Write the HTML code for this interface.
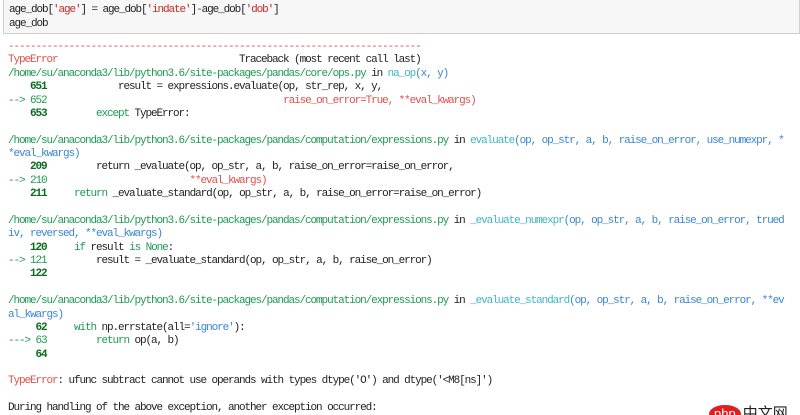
<!DOCTYPE html>
<html><head><meta charset="utf-8"><style>
html,body{margin:0;padding:0;background:#fff;width:800px;height:415px;overflow:hidden;position:relative}
pre{margin:0;font-family:"Liberation Mono","Noto Sans CJK SC",monospace;font-size:11px;letter-spacing:-1.1px;line-height:13.37px;color:#222;white-space:pre}
.in{position:absolute;left:3px;top:0;width:797px;height:34px;background:#f7f7f7;border:1px solid #cfcfcf;border-top:none;box-sizing:border-box}
.in pre{position:absolute;left:5px;top:3px;line-height:14px}
.out{position:absolute;left:8px;top:41px}
.r{color:#e0504a}.g{color:#1e9a52}.G{color:#0b6b1f;font-weight:bold}.c{color:#40b6c4}.b{color:#3a86cc}.s{color:#c62828}.k{color:#1e9a52}
.logo{position:absolute;left:709px;top:404px;white-space:nowrap;font-family:"Noto Sans CJK SC",sans-serif;font-size:15px;line-height:18px;color:#222}
.logo span{display:inline-block;background:#e02020;color:#fff;border-radius:50%;padding:0 5px;font-family:"Liberation Sans",sans-serif;font-size:13px;margin-right:2px}
</style></head><body>
<div class="in"><pre>age_dob[<span class="s">'age'</span>] = age_dob[<span class="s">'indate'</span>]<span style="color:#a020a0">-</span>age_dob[<span class="s">'dob'</span>]
age_dob</pre></div>
<pre class="out"><span class="r">---------------------------------------------------------------------------</span>
<span class="r">TypeError</span>                                 Traceback (most recent call last)
<span class="g">/home/su/anaconda3/lib/python3.6/site-packages/pandas/core/ops.py</span> in <span class="c">na_op</span><span class="b">(x, y)</span>
<span class="G">    651</span>             result = expressions.evaluate(op, str_rep, x, y,
<span class="g">--&gt; 652</span>                                           <span class="r">raise_on_error=True, **eval_kwargs)</span>
<span class="G">    653</span>         <span class="k">except</span> TypeError:

<span class="g">/home/su/anaconda3/lib/python3.6/site-packages/pandas/computation/expressions.py</span> in <span class="c">evaluate</span><span class="b">(op, op_str, a, b, raise_on_error, use_numexpr, *</span>
<span class="b">*eval_kwargs)</span>
<span class="G">    209</span>         return _evaluate(op, op_str, a, b, raise_on_error=raise_on_error,
<span class="g">--&gt; 210</span>                          <span class="r">**eval_kwargs)</span>
<span class="G">    211</span>     <span class="k">return</span> _evaluate_standard(op, op_str, a, b, raise_on_error=raise_on_error)

<span class="g">/home/su/anaconda3/lib/python3.6/site-packages/pandas/computation/expressions.py</span> in <span class="c">_evaluate_numexpr</span><span class="b">(op, op_str, a, b, raise_on_error, trued</span>
<span class="b">iv, reversed, **eval_kwargs)</span>
<span class="G">    120</span>     <span class="k">if</span> result <span class="k">is</span> <span class="k">None</span>:
<span class="g">--&gt; 121</span>         result = _evaluate_standard(op, op_str, a, b, raise_on_error)
<span class="G">    122</span>

<span class="g">/home/su/anaconda3/lib/python3.6/site-packages/pandas/computation/expressions.py</span> in <span class="c">_evaluate_standard</span><span class="b">(op, op_str, a, b, raise_on_error, **ev</span>
<span class="b">al_kwargs)</span>
<span class="G">     62</span>     <span class="k">with</span> np.errstate(all=<span class="b">'ignore'</span>):
<span class="g">---&gt; 63</span>         <span class="k">return</span> op(a, b)
<span class="G">     64</span>

<span class="r">TypeError</span>: ufunc subtract cannot use operands with types dtype('O') and dtype('&lt;M8[ns]')

During handling of the above exception, another exception occurred:</pre>
<div class="logo"><span>php</span>中文网</div>
</body></html>
